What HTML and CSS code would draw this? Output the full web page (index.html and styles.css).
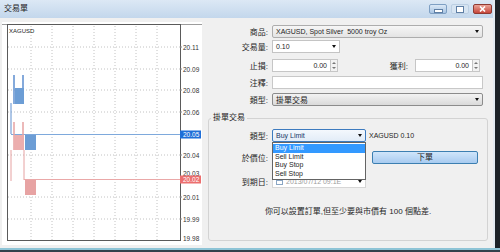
FILE: index.html
```html
<!DOCTYPE html>
<html lang="zh-Hant">
<head>
    <meta charset="UTF-8">
    <title>交易單</title>
    <link rel="stylesheet" href="styles.css">
</head>
<body>
    <div class="screen">
        <div class="window">
            <div class="titlebar">
                <span class="title">交易單</span>
                <div class="win-buttons">
                    <span class="wbtn min"></span>
                    <span class="wbtn max"></span>
                    <span class="wbtn close">
                        <svg width="7" height="6" viewBox="0 0 7 6"><path d="M1 0.5 L6 5.5 M6 0.5 L1 5.5" stroke="#fff" stroke-width="1.6"/></svg>
                    </span>
                </div>
            </div>
            <div class="client">
                <!-- price chart -->
                <div class="chart">
                    <svg width="200" height="223" viewBox="2 22 200 223">
                        <line x1="2" y1="24.5" x2="202" y2="24.5" stroke="#9c9c9c"/>
                        <g stroke="#c2c2c2" stroke-dasharray="1 2">
                            <path d="M31 26 V240 M52 26 V240 M73 26 V240 M94 26 V240 M115 26 V240 M136 26 V240 M157 26 V240"/>
                            <path d="M8 47 H180 M8 69 H180 M8 90 H180 M8 112 H180 M8 155 H180 M8 197 H180 M8 219 H180"/>
                        </g>
                        <rect x="7.5" y="24.5" width="173" height="216" fill="none" stroke="#5a5a5a"/>
                        <g stroke="#8a8a8a">
                            <path d="M180 47 H182 M180 69 H182 M180 90 H182 M180 112 H182 M180 155 H182 M180 197 H182 M180 219 H182"/>
                        </g>
                        <!-- bid -->
                        <path d="M14 75 V104 M23 75 V104" stroke="#5e8fcf" stroke-width="1.5" fill="none"/>
                        <path d="M11 103 V134" stroke="#5e8fcf" fill="none"/>
                        <rect x="15" y="88" width="9" height="16" fill="#6c9dd5"/>
                        <rect x="25" y="134" width="11" height="16" fill="#6c9dd5"/>
                        <line x1="11" y1="134.5" x2="181" y2="134.5" stroke="#7ea9dc"/>
                        <!-- ask -->
                        <path d="M14 122 V150 M23 122 V150" stroke="#e6a2a2" stroke-width="1.5" fill="none"/>
                        <path d="M11 150 V181 M24 150 V180" stroke="#e6a2a2" fill="none"/>
                        <rect x="14" y="135" width="10" height="15" fill="#ecaeae"/>
                        <rect x="25" y="179" width="11" height="16" fill="#e7a3a3"/>
                        <line x1="24" y1="179.5" x2="181" y2="179.5" stroke="#eaa8a8"/>
                        <g class="axis">
                            <text x="9" y="33" class="sym">XAGUSD</text>
                            <text x="183" y="49.5">20.11</text>
                            <text x="183" y="71.5">20.09</text>
                            <text x="183" y="92.5">20.08</text>
                            <text x="183" y="114.5">20.06</text>
                            <text x="183" y="157.5">20.04</text>
                            <text x="183" y="176">20.03</text>
                            <text x="183" y="199.5">20.01</text>
                            <text x="183" y="221.5">19.99</text>
                            <text x="183" y="240.5">19.98</text>
                        </g>
                        <rect x="180" y="130.5" width="21" height="8" fill="#1f6fd8"/>
                        <text x="183" y="137" class="tag">20.05</text>
                        <rect x="180" y="175.5" width="21" height="8" fill="#ec6f6f"/>
                        <text x="183" y="182" class="tag">20.02</text>
                    </svg>
                </div>

                <div class="order">
                    <div class="row first">
                        <label>商品:</label>
                        <div class="combo wide">XAGUSD, Spot Silver&nbsp; 5000 troy Oz<span class="arrow"></span></div>
                    </div>
                    <div class="row second">
                        <label>交易量:</label>
                        <div class="combo edit">0.10<span class="arrow"></span></div>
                    </div>
                    <div class="row third">
                        <label>止損:</label>
                        <div class="num">
                            <div class="box">0.00</div>
                            <div class="spin"><span class="up"></span><span class="down"></span></div>
                        </div>
                        <label class="tp">獲利:</label>
                        <div class="num short">
                            <div class="box">0.00</div>
                            <div class="spin"><span class="up"></span><span class="down"></span></div>
                        </div>
                    </div>
                    <div class="row">
                        <label>注釋:</label>
                        <div class="text-in"></div>
                    </div>
                    <div class="row">
                        <label>類型:</label>
                        <div class="combo wide dark">掛單交易<span class="arrow"></span></div>
                    </div>

                    <fieldset class="pending">
                        <legend>掛單交易</legend>
                        <div class="grow g1">
                            <label>類型:</label>
                            <div class="combo-wrap">
                                <div class="combo focus">Buy Limit<span class="arrow"></span></div>
                                <ul class="dropdown">
                                    <li class="sel">Buy Limit</li>
                                    <li>Sell Limit</li>
                                    <li>Buy Stop</li>
                                    <li>Sell Stop</li>
                                </ul>
                            </div>
                            <span class="info">XAGUSD 0.10</span>
                        </div>
                        <div class="grow g2">
                            <label>於價位:</label>
                            <div class="price-in"></div>
                            <div class="send">下單</div>
                        </div>
                        <div class="grow g3">
                            <label>到期日:</label>
                            <div class="date">
                                <span class="cal"></span>
                                <span class="dtext">2013/07/12 09:1E</span>
                                <span class="arrow"></span>
                            </div>
                        </div>
                        <p class="hint">你可以設置訂單,但至少要與市價有 100 個點差.</p>
                    </fieldset>
                </div>
            </div>
        </div>
    </div>
    <div class="taskbar"></div>
</body>
</html>
```

FILE: styles.css
```css
*{
    margin: 0;
    padding: 0;
    box-sizing: border-box;
}

body{
    width: 500px;
    height: 252px;
    overflow: hidden;
    background: #1c2228;
    font-family: "Liberation Sans", "Noto Sans CJK TC", sans-serif;
    font-size: 8px;
    color: #1e1e1e;
}

.screen{
    display: flex;
    height: 248px;
}

.window{
    width: 495px;
    height: 248px;
    display: flex;
    flex-direction: column;
    border-right: 2px solid #e4ebf2;
}

/* title bar */
.titlebar{
    height: 18px;
    display: flex;
    justify-content: space-between;
    align-items: flex-start;
    padding: 0 1px 0 4px;
    background: linear-gradient(#dce8f5, #c3d7ec);
}
.title{
    line-height: 18px;
    font-size: 8px;
}
.win-buttons{
    display: flex;
    gap: 4px;
    margin-top: 4px;
}
.wbtn{
    width: 18px;
    height: 10px;
    border-radius: 2px;
    display: flex;
    align-items: center;
    justify-content: center;
}
.wbtn.min{
    background: linear-gradient(#dbe8f6, #a8c4e3);
    border: 1px solid #7e9fc3;
}
.wbtn.min::after{
    content: "";
    width: 7px;
    height: 2px;
    margin-top: 3px;
    background: #fff;
    border: 1px solid #5f7fa5;
}
.wbtn.max{
    background: #d6e4f2;
    border: 1px solid #bccfe3;
}
.wbtn.max::after{
    content: "";
    width: 6px;
    height: 5px;
    border: 1px solid #5f7fa5;
    background: #fff;
}
.wbtn.close{
    width: 19px;
    background: linear-gradient(#eaa397, #c6463b);
    border: 1px solid #8f3b33;
}

/* client area */
.client{
    flex: 1;
    display: flex;
    background: #f0f0f0;
    padding-top: 4px;
}

.chart{
    width: 200px;
    height: 223px;
    margin-left: 2px;
    background: #fff;
}
.chart svg{
    display: block;
}
.axis text{
    font-family: "Liberation Sans", sans-serif;
    font-size: 6.5px;
    fill: #333;
}
.axis .sym{
    font-size: 6px;
    fill: #222;
}
.tag{
    font-family: "Liberation Sans", sans-serif;
    font-size: 6.5px;
    fill: #fff;
}

.order{
    width: 285px;
    margin-left: 3px;
    padding-top: 3px;
}

.row{
    display: flex;
    align-items: center;
    height: 13px;
    margin-top: 4px;
}
.row.first{
    margin-top: 0;
}
.row.second{
    margin-top: 2px;
}
.row.third{
    margin-top: 6px;
}
.row label{
    width: 63px;
    margin-right: 4px;
    text-align: right;
    flex: none;
}
.row label.tp{
    width: 70px;
    margin-right: 7px;
}

.combo{
    height: 13px;
    display: flex;
    align-items: center;
    justify-content: space-between;
    padding: 0 3px;
    font-size: 7px;
    border: 1px solid #adadad;
    border-radius: 2px;
    background: linear-gradient(#f6f6f6, #e4e4e4);
}
.combo.wide{
    width: 211px;
}
.combo.edit{
    width: 68px;
    background: #fff;
    border-color: #c4c4c4;
    border-radius: 0;
}
.combo.dark{
    font-size: 8px;
    border-color: #8c8c8c;
    background: linear-gradient(#f3f3f3, #dadada);
}
.arrow{
    width: 0;
    height: 0;
    border-left: 2.5px solid transparent;
    border-right: 2.5px solid transparent;
    border-top: 3px solid #111;
}

.num{
    display: flex;
    width: 66px;
}
.num.short{
    width: 65px;
}
.num .box{
    flex: 1;
    height: 13px;
    line-height: 11px;
    text-align: right;
    padding-right: 3px;
    font-size: 7px;
    background: #fff;
    border: 1px solid #c6c6c6;
}
.spin{
    width: 7px;
    height: 13px;
    display: flex;
    flex-direction: column;
    align-items: center;
    justify-content: space-around;
    background: #f2f2f2;
    border: 1px solid #c6c6c6;
    border-left: 0;
}
.spin .up{
    border-left: 2px solid transparent;
    border-right: 2px solid transparent;
    border-bottom: 2px solid #777;
}
.spin .down{
    border-left: 2px solid transparent;
    border-right: 2px solid transparent;
    border-top: 2px solid #777;
}

.text-in{
    width: 211px;
    height: 13px;
    background: #fff;
    border: 1px solid #c8c8c8;
}

/* pending order group */
.pending{
    margin: 7px 2px 0 3px;
    width: 280px;
    height: 128px;
    border: 1px solid #d3d3d3;
    border-radius: 3px;
}
.pending legend{
    margin-left: 2px;
    padding: 0 2px;
    line-height: 10px;
}

.grow{
    display: flex;
    align-items: center;
    height: 13px;
}
.grow label{
    width: 59px;
    margin-right: 4px;
    text-align: right;
    flex: none;
}
.g1{
    margin-top: 6px;
}
.g2{
    margin-top: 9px;
}
.g3{
    margin-top: 11px;
}

.combo-wrap{
    position: relative;
    width: 94px;
}
.combo.focus{
    width: 94px;
    border-color: #3d7bbf;
    background: linear-gradient(#f4f8fd, #e2ecf7);
    color: #173766;
}
.dropdown{
    position: absolute;
    top: 13px;
    left: 0;
    width: 94px;
    height: 38px;
    list-style: none;
    padding-top: 1px;
    background: #fff;
    border: 1px solid #646464;
    z-index: 2;
}
.dropdown li{
    height: 8.5px;
    line-height: 8.5px;
    padding-left: 2px;
    font-size: 7px;
}
.dropdown li.sel{
    background: #3399ff;
    color: #fff;
}
.info{
    margin-left: 3px;
    font-size: 7px;
}

.price-in{
    width: 94px;
    height: 13px;
    background: #fff;
    border: 1px solid #c8c8c8;
}
.send{
    width: 106px;
    height: 13px;
    margin-left: 6px;
    line-height: 11px;
    text-align: center;
    border: 1px solid #3c7fb1;
    border-radius: 2px;
    background: linear-gradient(#cfe5fa, #a8cbf0);
}

.date{
    width: 94px;
    height: 13px;
    display: flex;
    align-items: center;
    padding: 0 3px;
    background: #fff;
    border: 1px solid #d6d6d6;
}
.cal{
    width: 7px;
    height: 6px;
    border: 1px solid #8aa6c4;
    border-top-width: 2px;
    margin-right: 3px;
}
.dtext{
    flex: 1;
    font-size: 7px;
    color: #9c9c9c;
}

.hint{
    margin-top: 19px;
    line-height: 10px;
    text-align: center;
}

.taskbar{
    height: 4px;
    border-top: 2px solid #8ec4d6;
    background: #33414c;
}
```
